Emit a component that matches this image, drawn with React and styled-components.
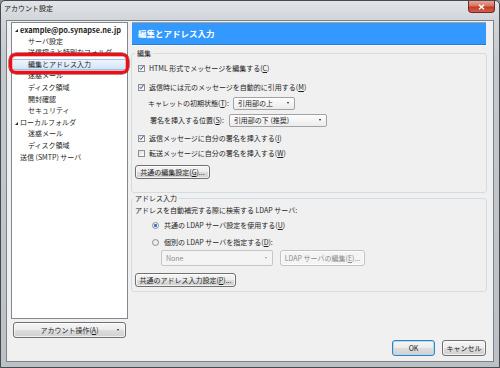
import React from 'react';
import styled, { createGlobalStyle } from 'styled-components';

const GlobalStyle = createGlobalStyle`
  html, body { margin: 0; padding: 0; }
  body {
    width: 500px; height: 368px; overflow: hidden;
    background: #8d9399;
    font-family: "Noto Sans CJK JP", "Noto Sans", sans-serif;
    font-size: 7px; color: #1e1e1e;
  }
  * { box-sizing: border-box; }
  u { text-decoration: underline; text-underline-offset: 1px; }
`;

const Window = styled.div`
  width: 500px; height: 368px;
  border: 1px solid #474b50;
  border-radius: 5px 5px 0 0;
  background: linear-gradient(180deg, #e1e5e9 0px, #d2d6db 18px, #c4c9ce 60px, #bcc1c6 100%);
  display: flex; flex-direction: column;
`;

const TitleBar = styled.div`
  height: 19px;
  display: flex; justify-content: space-between; align-items: flex-start;
  padding: 0 4px 0 3px;
`;

const Title = styled.div`
  line-height: 14px; color: #141414;
`;

const CloseButton = styled.div`
  width: 27px; height: 12px;
  border: 1px solid #6e2a22; border-top: none;
  border-radius: 0 0 4px 4px;
  background: linear-gradient(180deg, #eaa598 0%, #d9715f 45%, #c23c26 55%, #d2604a 100%);
  display: flex; align-items: center; justify-content: center;
`;

const Client = styled.div`
  flex: 1;
  margin: 0 5px 5px;
  border: 1px solid #7d8288;
  background: #f0f0f0;
  display: grid;
  grid-template-columns: 117px 356px;
  column-gap: 3px;
  padding: 1px 6px 5px 4px;
`;

const LeftCol = styled.div`
  display: flex; flex-direction: column; gap: 3px;
`;

const Tree = styled.div`
  height: 297px;
  border: 1px solid #828790;
  background: #fff;
  position: relative;
  padding: 1px 1px 0 1px;
`;

const TreeRow = styled.div`
  height: 11.6px; line-height: 11.6px;
  display: flex; align-items: center;
  padding-left: ${p => p.$indent}px;
  white-space: nowrap;
  font-weight: ${p => (p.$bold ? 700 : 400)};
  font-size: ${p => (p.$bold ? '7.4px' : '7px')};
  border: 1px solid ${p => (p.$selected ? '#9cc3ea' : 'transparent')};
  border-left-width: 0; border-right-width: 0;
  background: ${p => (p.$selected ? 'linear-gradient(180deg, #eef5fd, #d3e5f9)' : 'transparent')};
`;

const Expander = styled.span`
  width: 0; height: 0;
  border-left: 3px solid transparent;
  border-bottom: 3px solid #262626;
  margin-right: 2px;
  margin-top: 1px;
`;

const Highlight = styled.div`
  position: absolute;
  left: -3px; top: 30px;
  width: 120px; height: 21px;
  border: 3.5px solid #e5121b;
  border-radius: 7px;
  box-shadow: 0 0 0 0.5px #a0060c, inset 0 0 0 0.5px #ff6a6a;
  pointer-events: none;
`;

const PushButton = styled.div`
  height: ${p => p.$h || 14}px;
  ${p => (p.$w ? `width: ${p.$w}px;` : '')}
  padding: 0 4px;
  display: flex; align-items: center; justify-content: center;
  border: 1px solid ${p => (p.$default ? '#3c7fb1' : p.$disabled ? '#c2c2c2' : '#707070')};
  border-radius: 3px;
  background: ${p => (p.$disabled
    ? '#f4f4f4'
    : 'linear-gradient(180deg, #f6f6f6 0%, #ececec 48%, #dddddd 52%, #d0d0d0 100%)')};
  box-shadow: inset 0 0 0 1px ${p => (p.$default ? '#a7dbf6' : 'rgba(255,255,255,0.7)')};
  color: ${p => (p.$disabled ? '#8a8a8a' : '#1e1e1e')};
  white-space: nowrap;
  line-height: 1;
`;

const AccountButton = styled(PushButton)`
  margin: 0 2px;
  height: 16px;
  justify-content: space-between;
  padding: 0 6px 0 0;
`;

const AccountLabel = styled.span`
  flex: 1; text-align: center; padding-left: 8px;
`;

const SmallArrow = styled.span`
  width: 0; height: 0;
  border-left: 1.5px solid transparent;
  border-right: 1.5px solid transparent;
  border-top: 2px solid ${p => (p.$disabled ? '#9a9a9a' : '#1e1e1e')};
`;

const RightCol = styled.div`
  display: flex; flex-direction: column;
`;

const Header = styled.div`
  margin: 0 1px;
  height: 23px;
  background: #3399ff;
  border-top: 1px solid #a2a2a2;
  border-bottom: 1px solid #2a7bd2;
  box-shadow: 0 1px 0 #ffffff;
  color: #fff;
  font-weight: 700;
  font-size: 8.5px;
  line-height: 20px;
  padding-left: 6px;
`;

const Group = styled.fieldset`
  margin: ${p => p.$mt}px 0 0;
  padding: 0 0 ${p => p.$pb}px 0;
  border: 1px solid #d5dce1;
  border-radius: 3px;
  min-width: 0;
`;

const Legend = styled.legend`
  padding: 0 2px;
  margin-left: ${p => p.$ml}px;
  line-height: 10px;
  font-size: 7px;
`;

const Row = styled.div`
  display: flex; align-items: center;
  height: ${p => p.$h || 14}px;
  margin-top: ${p => p.$mt || 0}px;
  padding-left: ${p => p.$pl || 0}px;
  gap: ${p => (p.$gap != null ? p.$gap : 3)}px;
  white-space: nowrap;
`;

const Label = styled.span`
  white-space: nowrap;
`;

const Box = styled.span`
  width: 7px; height: 7px;
  border: 1px solid #8e8f8f;
  background: linear-gradient(135deg, #dcdcdc, #ffffff);
  display: inline-flex; align-items: center; justify-content: center;
  margin-right: 1px;
  flex: none;
`;

const Radio = styled.span`
  width: 7px; height: 7px;
  border-radius: 50%;
  border: 1px solid #8e8f8f;
  background: radial-gradient(circle, ${p => (p.$on ? '#2a5cc0 0, #4f8ad8 1.4px, #eef2f6 2px' : '#f4f4f4 0, #e2e2e2 3px')});
  margin-right: 2px;
  flex: none;
`;

const Select = styled.div`
  width: ${p => p.$w}px;
  height: ${p => p.$h || 13}px;
  border: 1px solid ${p => (p.$disabled ? '#c6c6c6' : '#a3a3a3')};
  border-radius: 2px;
  background: ${p => (p.$disabled ? '#f4f4f4' : 'linear-gradient(180deg, #fdfdfd, #ececec)')};
  color: ${p => (p.$disabled ? '#8c8c8c' : '#1e1e1e')};
  display: flex; align-items: center; justify-content: space-between;
  padding: 0 5px 0 4px;
  margin-left: ${p => p.$ml || 0}px;
`;

const Footer = styled.div`
  margin-top: auto;
  display: flex; justify-content: flex-end; gap: 7px;
  padding-right: 1px;
`;

const Check = () => (
  <Box>
    <svg width="6" height="6" viewBox="0 0 6 6">
      <path d="M0.8 3.2 L2.3 4.9 L5.4 0.6" fill="none" stroke="#3a5a9c" strokeWidth="1.2" />
    </svg>
  </Box>
);

const tree = [
  { t: 'example@po.synapse.ne.jp', indent: 2, exp: true, bold: true },
  { t: 'サーバ設定', indent: 15 },
  { t: '送信控えと特別なフォルダ', indent: 15 },
  { t: '編集とアドレス入力', indent: 15, sel: true },
  { t: '迷惑メール', indent: 15 },
  { t: 'ディスク領域', indent: 15 },
  { t: '開封確認', indent: 15 },
  { t: 'セキュリティ', indent: 15 },
  { t: 'ローカルフォルダ', indent: 2, exp: true },
  { t: '迷惑メール', indent: 15 },
  { t: 'ディスク領域', indent: 15 },
  { t: '送信 (SMTP) サーバ', indent: 7 },
];

export default function App() {
  return (
    <>
      <GlobalStyle />
      <Window>
        <TitleBar>
          <Title>アカウント設定</Title>
          <CloseButton>
            <svg width="7" height="6" viewBox="0 0 7 6">
              <path d="M1 0.8 L6 5.2 M6 0.8 L1 5.2" stroke="#fff" strokeWidth="1.5" />
            </svg>
          </CloseButton>
        </TitleBar>
        <Client>
          <LeftCol>
            <Tree>
              {tree.map((r, i) => (
                <TreeRow key={i} $indent={r.indent} $bold={r.bold} $selected={r.sel}>
                  {r.exp && <Expander />}
                  {r.t}
                </TreeRow>
              ))}
              <Highlight />
            </Tree>
            <AccountButton $h={16}>
              <AccountLabel>アカウント操作(<u>A</u>)</AccountLabel>
              <SmallArrow />
            </AccountButton>
          </LeftCol>
          <RightCol>
            <Header>編集とアドレス入力</Header>
            <Group $mt={3} $pb={13}>
              <Legend $ml={3}>編集</Legend>
              <Row $mt={3} $pl={6}><Check /><Label>HTML 形式でメッセージを編集する(<u>C</u>)</Label></Row>
              <Row $mt={5} $pl={6}><Check /><Label>返信時には元のメッセージを自動的に引用する(<u>M</u>)</Label></Row>
              <Row $mt={2} $pl={16}>
                <Label>キャレットの初期状態(<u>T</u>):</Label>
                <Select $w={62} $ml={1}>引用部の上<SmallArrow /></Select>
              </Row>
              <Row $mt={3} $pl={18}>
                <Label>署名を挿入する位置(<u>S</u>):</Label>
                <Select $w={98} $ml={2}>引用部の下 (推奨)<SmallArrow /></Select>
              </Row>
              <Row $mt={4} $pl={6}><Check /><Label>返信メッセージに自分の署名を挿入する(<u>I</u>)</Label></Row>
              <Row $mt={1} $pl={6}><Box /><Label>転送メッセージに自分の署名を挿入する(<u>W</u>)</Label></Row>
              <Row $mt={5} $pl={3}>
                <PushButton $w={75}><Label>共通の編集設定(<u>G</u>)...</Label></PushButton>
              </Row>
            </Group>
            <Group $mt={0} $pb={4}>
              <Legend $ml={1}>アドレス入力</Legend>
              <Row $pl={3}><Label>アドレスを自動補完する際に検索する LDAP サーバ:</Label></Row>
              <Row $mt={1} $pl={20}><Radio $on /><Label>共通の LDAP サーバ設定を使用する(<u>U</u>)</Label></Row>
              <Row $mt={3} $pl={20}><Radio /><Label>個別の LDAP サーバを指定する(<u>D</u>):</Label></Row>
              <Row $mt={1} $pl={29} $h={16} $gap={7}>
                <Select $w={112} $h={16} $disabled>None<SmallArrow $disabled /></Select>
                <PushButton $w={85} $h={16} $disabled><Label>LDAP サーバの編集(<u>E</u>)...</Label></PushButton>
              </Row>
              <Row $mt={7} $pl={3}>
                <PushButton $w={101}><Label>共通のアドレス入力設定(<u>P</u>)...</Label></PushButton>
              </Row>
            </Group>
            <Footer>
              <PushButton $w={43} $h={16} $default>OK</PushButton>
              <PushButton $w={44} $h={16}>キャンセル</PushButton>
            </Footer>
          </RightCol>
        </Client>
      </Window>
    </>
  );
}
